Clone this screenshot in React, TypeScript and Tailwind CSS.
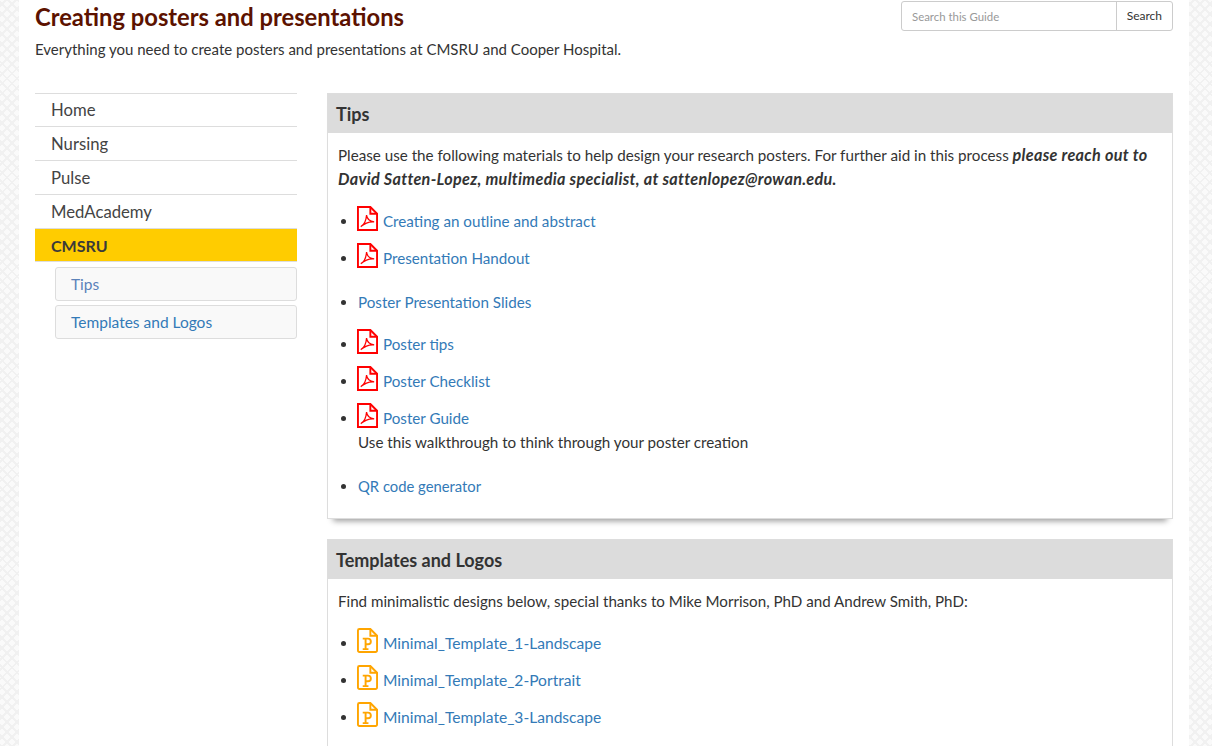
const Pdf = () => (
  <svg width="21" height="25" viewBox="0 0 22 26" fill="none" className="-ml-px mr-[5px] inline-block translate-y-[2px] align-[-2px]">
    <path d="M1 1h13l7 7v17H1z" stroke="#ff0000" strokeWidth="2" fill="#fff" />
    <path d="M14 1v7h7" stroke="#ff0000" strokeWidth="2" />
    <path d="M4 21.500c3-1.500 5.500-6 6-12 .5 4 3 6.500 8 7-5-.5-10 1.500-14 5z" stroke="#ff0000" strokeWidth="1.300" />
  </svg>
);

const Ppt = () => (
  <svg width="21" height="25" viewBox="0 0 22 26" fill="none" className="-ml-px mr-[5px] inline-block translate-y-[2px] align-[-2px]">
    <path d="M2.500 1H14l7 7v15.500a1.500 1.500 0 0 1-1.500 1.500h-17A1.500 1.500 0 0 1 1 23.500v-21A1.500 1.500 0 0 1 2.500 1z" stroke="#ffa500" strokeWidth="2" fill="#fff" />
    <path d="M14 1v7h7" stroke="#ffa500" strokeWidth="2" />
    <path d="M6 11h5.500a3 3 0 0 1 0 6H9M9 11v11M6 22h6" stroke="#ffa500" strokeWidth="2" />
  </svg>
);

const Link = ({ children }: { children: React.ReactNode }) => (
  <a href="#" className="text-[#337ab7]">{children}</a>
);

const navItems = ["Nursing", "Pulse", "MedAcademy"];

export default function App() {
  return (
    <div className="h-[746px] overflow-hidden bg-[#fafafa] bg-[repeating-linear-gradient(45deg,#f1f1f1_0_2px,transparent_2px_7px),repeating-linear-gradient(-45deg,#f1f1f1_0_2px,transparent_2px_7px)] font-['Lato','Liberation_Sans',sans-serif] text-[15.2px] leading-[24px] text-[#333]">
      <div className="ml-[19px] h-full w-[1170px] bg-white px-4">
        <div className="flex justify-between">
          <div>
            <h1 className="text-[23.750px] font-bold leading-[34px] text-[#5c1200]">Creating posters and presentations</h1>
            <p className="mt-[3px] text-[15px]">Everything you need to create posters and presentations at CMSRU and Cooper Hospital.</p>
          </div>
          <div className="mt-[1px] flex h-[30px] w-[272px] rounded-[3px] border border-[#ccc] text-[12px]">
            <div className="flex-1 pl-[10px] text-[11.400px] leading-[30px] text-[#999]">Search this Guide</div>
            <div className="border-l border-[#ccc] px-[10px] leading-[28px] text-[#333]">Search</div>
          </div>
        </div>
        <div className="mt-[32px] flex gap-[30px]">
          <nav className="w-[262px] shrink-0">
            <div className="h-[33px] border-t border-[#ddd] pl-4 text-[16.700px] leading-[33px] text-[#444]">Home</div>
            {navItems.map((item) => (
              <div key={item} className="h-[34px] border-t border-[#ddd] pl-4 text-[16.700px] leading-[35px] text-[#444]">{item}</div>
            ))}
            <div className="h-[34px] border-y border-[#ddd] bg-[#ffcc00] pl-4 text-[16px] font-bold leading-[33px] text-[#3a3a3a]">CMSRU</div>
            <div className="ml-5 mt-[5px] h-[34px] rounded-[3px] border border-[#ddd] bg-[#f9f9f9] pl-[15px] text-[15.500px] leading-[32px] text-[#5b82b9]">Tips</div>
            <div className="ml-5 mt-[4px] h-[34px] rounded-[3px] border border-[#ddd] bg-[#f9f9f9] pl-[15px] text-[15.500px] leading-[32px] text-[#337ab7]">Templates and Logos</div>
          </nav>
          <main className="flex-1">
            <section className="border border-[#ddd] shadow-[0_8px_6px_-6px_rgba(0,0,0,0.4)]">
              <h2 className="h-[39px] bg-[#dcdcdc] pl-2 text-[18px] font-bold leading-[40px]">Tips</h2>
              <div className="px-[10px] pt-[10px] pb-[20px]">
                <p>Please use the following materials to help design your research posters. For further aid in this process <b className="text-[16.200px] tracking-[0.3px]"><i>please reach out to David Satten-Lopez, multimedia specialist, at sattenlopez@rowan.edu.</i></b></p>
                <ul className="mt-[13px] list-disc pl-5">
                  <li className="h-[37px]"><Pdf /><Link>Creating an outline and abstract</Link></li>
                  <li className="h-[44px]"><Pdf /><Link>Presentation Handout</Link></li>
                  <li className="h-[42px] pt-[5px]"><Link>Poster Presentation Slides</Link></li>
                  <li className="h-[37px]"><Pdf /><Link>Poster tips</Link></li>
                  <li className="h-[37px]"><Pdf /><Link>Poster Checklist</Link></li>
                  <li className="h-[56px]"><Pdf /><Link>Poster Guide</Link><br />Use this walkthrough to think through your poster creation</li>
                  <li className="pt-[17px] text-[14.800px]"><Link>QR code generator</Link></li>
                </ul>
              </div>
            </section>
            <section className="mt-[20px] border border-[#ddd] pb-10">
              <h2 className="h-[39px] bg-[#dcdcdc] pl-2 text-[18px] font-bold leading-[40px]">Templates and Logos</h2>
              <div className="px-[10px] pt-[10px]">
                <p className="text-[15.150px]">Find minimalistic designs below, special thanks to Mike Morrison, PhD and Andrew Smith, PhD:</p>
                <ul className="mt-[13px] list-disc pl-5 text-[15.600px]">
                  <li className="h-[37px]"><Ppt /><Link>Minimal_Template_1-Landscape</Link></li>
                  <li className="h-[37px]"><Ppt /><Link>Minimal_Template_2-Portrait</Link></li>
                  <li className="h-[37px]"><Ppt /><Link>Minimal_Template_3-Landscape</Link></li>
                </ul>
              </div>
            </section>
          </main>
        </div>
      </div>
    </div>
  );
}
